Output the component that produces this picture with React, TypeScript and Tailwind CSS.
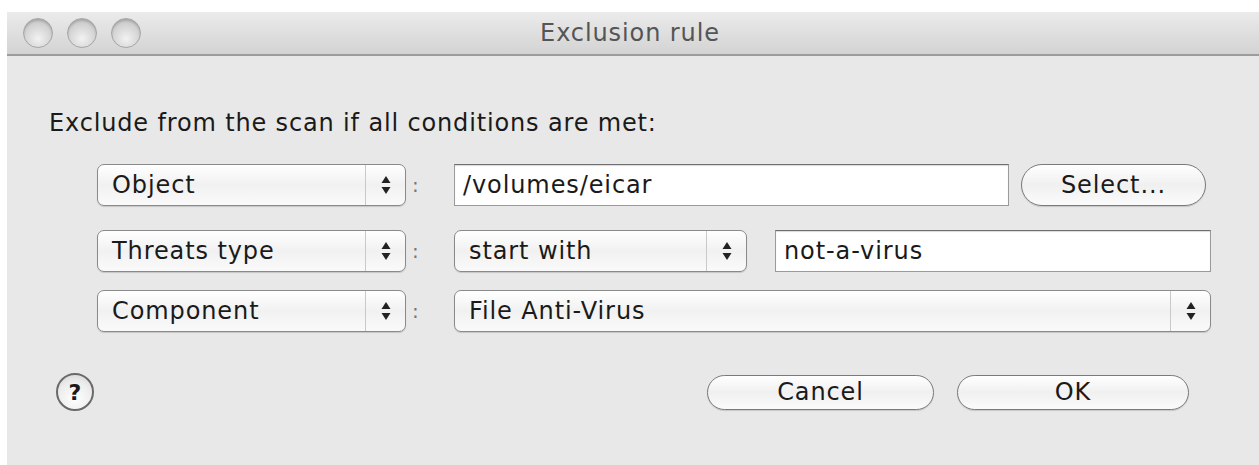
import React from 'react';

const font = { fontFamily: '"DejaVu Sans", "Lucida Grande", sans-serif' };

function Arrows() {
   return (
      <svg width="10" height="20" viewBox="0 0 10 20">
         <path d="M5 1 L9.5 8 L0.5 8 Z" fill="#222" />
         <path d="M5 19 L9.5 12 L0.5 12 Z" fill="#222" />
      </svg>
   );
}

function PopUp({ label, className = '' }: { label: string; className?: string }) {
   return (
      <div
         className={`flex h-[42px] items-stretch rounded-[7px] border border-[#8a8a8a] bg-gradient-to-b from-white via-[#f1f1f1] to-[#fafafa] shadow-[0_1px_1px_rgba(0,0,0,0.15)] ${className}`}
      >
         <div className="flex flex-1 items-center pl-[14px] text-[24px] tracking-[0.9px] text-[#1a1a1a]">
            {label}
         </div>
         <div className="flex w-[40px] items-center justify-center border-l border-[#c9c9c9]">
            <Arrows />
         </div>
      </div>
   );
}

function Colon() {
   return <span className="w-[48px] pl-[6px] text-[20px] leading-none text-[#777]">:</span>;
}

function Field({ value, className = '' }: { value: string; className?: string }) {
   return (
      <div
         className={`flex h-[42px] items-center border border-[#9a9a9a] border-t-[#6f6f6f] bg-white pl-[8px] text-[24px] tracking-[0.9px] text-[#1a1a1a] shadow-[inset_0_1px_1px_rgba(0,0,0,0.15)] ${className}`}
      >
         {value}
      </div>
   );
}

function Pill({ label, className = '' }: { label: string; className?: string }) {
   return (
      <div
         className={`flex items-center justify-center rounded-full border border-[#7a7a7a] bg-gradient-to-b from-white via-[#f0f0f0] to-[#fbfbfb] text-[24px] tracking-[0.9px] text-[#1a1a1a] shadow-[0_1px_1px_rgba(0,0,0,0.15)] ${className}`}
      >
         {label}
      </div>
   );
}

function Light() {
   return (
      <div className="h-[30px] w-[30px] rounded-full border border-[#a5a5a5] bg-[radial-gradient(circle_at_50%_70%,#f2f2f2_0%,#d4d4d4_55%,#b9b9b9_100%)] shadow-[inset_0_2px_2px_rgba(0,0,0,0.15)]" />
   );
}

export default function App() {
   return (
      <div className="h-[465px] w-[1259px] overflow-hidden bg-white" style={font}>
         <div className="ml-[7px] mt-[12px] h-[453px] bg-[#e8e8e8]">
            {/* title bar */}
            <div className="relative flex h-[44px] items-center border-b-2 border-[#9c9c9c] bg-gradient-to-b from-[#ebebeb] to-[#d3d3d3]">
               <div className="flex gap-[14px] pl-[16px]">
                  <Light />
                  <Light />
                  <Light />
               </div>
               <div className="absolute inset-0 flex items-center justify-center pr-[6px] text-[24px] tracking-[0.9px] text-[#555]">
                  Exclusion rule
               </div>
            </div>

            <div className="pl-[42px] pt-[53px] pr-[40px]">
               <div className="text-[24px] leading-[28px] tracking-[0.85px] text-[#1a1a1a]">
                  Exclude from the scan if all conditions are met:
               </div>

               <div className="mt-[27px] flex flex-col pl-[48px]">
                  <div className="flex items-center">
                     <PopUp label="Object" className="w-[309px]" />
                     <Colon />
                     <Field value="/volumes/eicar" className="w-[555px]" />
                     <Pill label="Select..." className="ml-[12px] h-[42px] w-[185px]" />
                  </div>
                  <div className="mt-[24px] flex items-center">
                     <PopUp label="Threats type" className="w-[309px]" />
                     <Colon />
                     <PopUp label="start with" className="w-[293px]" />
                     <Field value="not-a-virus" className="ml-[28px] w-[436px]" />
                  </div>
                  <div className="mt-[18px] flex items-center">
                     <PopUp label="Component" className="w-[309px]" />
                     <Colon />
                     <PopUp label="File Anti-Virus" className="w-[757px]" />
                  </div>
               </div>

               <div className="mt-[41px] flex items-center pl-[7px]">
                  <div className="flex h-[38px] w-[38px] items-center justify-center rounded-full border-2 border-[#6a6a6a] bg-[radial-gradient(circle_at_50%_70%,#ffffff_0%,#ececec_60%,#cfcfcf_100%)] text-[22px] font-bold text-[#1a1a1a]">
                     ?
                  </div>
                  <div className="ml-auto flex gap-[23px] pr-[30px]">
                     <Pill label="Cancel" className="h-[35px] w-[227px]" />
                     <Pill label="OK" className="h-[35px] w-[232px]" />
                  </div>
               </div>
            </div>
         </div>
      </div>
   );
}
